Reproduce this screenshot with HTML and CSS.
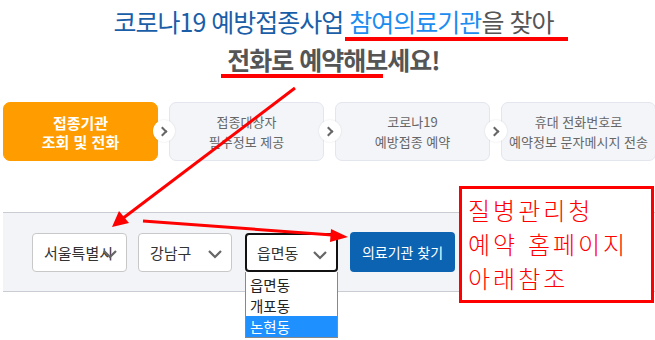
FILE: index.html
```html
<!DOCTYPE html>
<html lang="ko">
<head>
    <meta charset="UTF-8">
    <title>코로나19 예방접종 참여의료기관</title>
    <link rel="stylesheet" href="styles.css">
</head>
<body>
    <div id="page">
        <h1 class="title">
            <span class="t-line"><span class="t-blue">코로나19 예방접종사업 </span><span class="t-light">참여의료기관</span>을 찾아</span>
            <span class="t-line t-bold">전화로 예약해보세요!</span>
        </h1>

        <ul class="steps">
            <li class="step on">접종기관<br>조회 및 전화<i class="next"></i></li>
            <li class="step">접종대상자<br>필수정보 제공<i class="next"></i></li>
            <li class="step">코로나19<br>예방접종 예약<i class="next"></i></li>
            <li class="step">휴대 전화번호로<br>예약정보 문자메시지 전송</li>
        </ul>

        <div class="search">
            <div class="sel w1"><span>서울특별시</span><svg viewBox="0 0 14 9"><path d="M1 1l6 6 6-6"/></svg></div>
            <div class="sel w2"><span>강남구</span><svg viewBox="0 0 14 9"><path d="M1 1l6 6 6-6"/></svg></div>
            <div class="sel w3 focus"><span>읍면동</span><svg viewBox="0 0 14 9"><path d="M1 1l6 6 6-6"/></svg>
                <ul class="drop">
                    <li>읍면동</li>
                    <li>개포동</li>
                    <li class="hover">논현동</li>
                </ul>
            </div>
            <button class="btn">의료기관 찾기</button>
        </div>

        <div class="note">질병관리청<br>예약 홈페이지<br>아래참조</div>

        <!-- 빨간 표시선 -->
        <svg class="marks" width="655" height="340" viewBox="0 0 655 340">
            <g stroke="#ff0000" stroke-width="4" fill="none">
                <line x1="345" y1="39" x2="568" y2="39"/>
                <line x1="221" y1="76" x2="383" y2="76"/>
            </g>
            <g stroke="#ff0000" stroke-width="3" fill="none">
                <line x1="295" y1="88" x2="122" y2="219"/>
                <line x1="143" y1="221" x2="332" y2="235"/>
            </g>
            <g fill="#ff0000">
                <polygon points="112,227 119,211 129,223"/>
                <polygon points="348,237 331,229 330,242"/>
            </g>
        </svg>
    </div>
</body>
</html>
```

FILE: styles.css
```css
*{
    margin: 0;
    padding: 0;
}
li {
    list-style: none;
}
body {
    font-family: "Noto Sans CJK KR", "Noto Sans", sans-serif;
    background: #fff;
}
#page {
    position: relative;
    width: 655px;
    height: 340px;
    overflow: hidden;
}
.title {
    display: flex;
    flex-direction: column;
    align-items: center;
    padding: 2px 0 0 12px;
    font-size: 25px;
    font-weight: 400;
    letter-spacing: -1px;
    line-height: 38px;
    color: #555;
}
.t-blue {
    color: #1a5ea8;
}
.t-light {
    color: #1c8df0;
}
.t-bold {
    font-weight: 700;
}
.steps {
    display: flex;
    gap: 11px;
    padding: 24px 0 0 3px;
}
.step {
    position: relative;
    flex: 0 0 155px;
    height: 59px;
    box-sizing: border-box;
    border: 1px solid #e3e6ee;
    border-radius: 7px;
    background: #f4f5f8;
    color: #666;
    font-size: 13px;
    line-height: 20px;
    text-align: center;
    padding-top: 9px;
}
.step.on {
    background: #ff9d00;
    border-color: #ff9d00;
    color: #fff;
    font-size: 15px;
    font-weight: 700;
    line-height: 19px;
    padding-top: 10px;
}
.next {
    position: absolute;
    right: -18px;
    top: 17px;
    z-index: 2;
    width: 22px;
    height: 22px;
    border-radius: 50%;
    background: #fff;
    box-shadow: 0 0 2px rgba(0,0,0,0.12);
}
.next:after {
    content: "";
    position: absolute;
    left: 6px;
    top: 8px;
    width: 5px;
    height: 5px;
    border-top: 2px solid #666;
    border-right: 2px solid #666;
    transform: rotate(45deg);
}
.search {
    display: flex;
    align-items: center;
    margin: 51px 0 0 3px;
    height: 78px;
    border-top: 1px solid #c9ccd2;
    border-bottom: 1px solid #c9ccd2;
    background: #f3f4f7;
    padding-left: 29px;
    gap: 11px;
}
.sel {
    position: relative;
    display: flex;
    align-items: center;
    height: 39px;
    box-sizing: border-box;
    border: 1px solid #c8c8c8;
    border-radius: 4px;
    background: #fff;
    padding-left: 11px;
    font-size: 15px;
    color: #333;
}
.sel svg {
    position: absolute;
    right: 9px;
    top: 16px;
    width: 14px;
    height: 9px;
    fill: none;
    stroke: #666;
    stroke-width: 2.2;
}
.w1 { width: 95px; }
.w2 { width: 94px; }
.w3 { width: 93px; margin-left: 2px; }
.sel.focus {
    border: 2px solid #111;
    padding-left: 10px;
}
.drop {
    position: absolute;
    left: -2px;
    top: 37px;
    width: 93px;
    z-index: 3;
    background: #fff;
    border: 1px solid #888;
    border-top: 0;
    padding-top: 2px;
    box-sizing: border-box;
}
.drop li {
    height: 21px;
    line-height: 21px;
    padding-left: 4px;
    font-size: 14.5px;
    color: #222;
}
.drop li.hover {
    background: #1e90ff;
    color: #fff;
}
.btn {
    width: 105px;
    height: 40px;
    margin-left: 1px;
    border: 0;
    border-radius: 4px;
    background: #0b63b2;
    color: #fff;
    font-family: inherit;
    font-size: 14px;
}
.note {
    position: absolute;
    left: 459px;
    top: 186px;
    width: 195px;
    height: 117px;
    box-sizing: border-box;
    border: 3px solid #ff0000;
    background: #fff;
    padding: 4px 0 0 6px;
    color: #ff0000;
    font-size: 24px;
    font-weight: 300;
    line-height: 34px;
    letter-spacing: 3px;
}
.marks {
    position: absolute;
    left: 0;
    top: 0;
    z-index: 5;
    pointer-events: none;
}
```
